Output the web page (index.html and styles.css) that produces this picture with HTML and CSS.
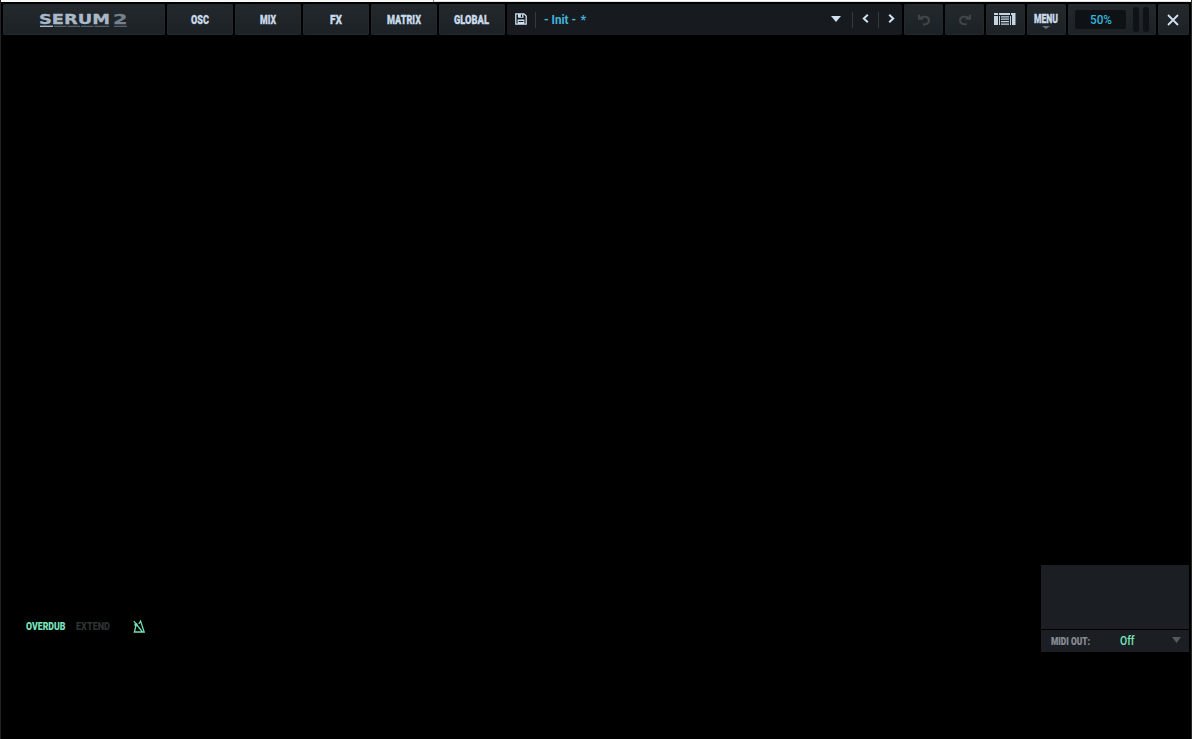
FILE: index.html
```
<!DOCTYPE html>
<html lang="en">
<head>
<meta charset="utf-8">
<title>Serum 2</title>
<link rel="stylesheet" href="styles.css">
</head>
<body>
<div class="plugin">
  <div class="host-strip"><span class="host-left"></span><span class="host-right"></span></div>
  <header class="bar">
    <div class="cell logo">
      <svg width="90" height="18" viewBox="0 0 90 18">
        <text class="brand" x="0" y="12.6" textLength="71" lengthAdjust="spacingAndGlyphs">SERUM</text>
        <text class="brand two" x="74" y="12.6" textLength="14.5" lengthAdjust="spacingAndGlyphs">2</text>
        <path d="M1 15.3H14" stroke="#a9b8c6" stroke-width="1.4"/>
        <path d="M15 15.3H27.5M28.5 15.3H41M42 15.3H54.5M55.5 15.3H70M75 15.3H88" stroke="#56616b" stroke-width="1.3"/>
      </svg>
    </div>
    <button class="cell"><svg class="label" width="18" height="16"><text x="0" y="12.5" textLength="18" lengthAdjust="spacingAndGlyphs">OSC</text></svg></button>
    <button class="cell"><svg class="label" width="16" height="16"><text x="0" y="12.5" textLength="16" lengthAdjust="spacingAndGlyphs">MIX</text></svg></button>
    <button class="cell"><svg class="label" width="12" height="16"><text x="0" y="12.5" textLength="12" lengthAdjust="spacingAndGlyphs">FX</text></svg></button>
    <button class="cell"><svg class="label" width="34" height="16"><text x="0" y="12.5" textLength="34" lengthAdjust="spacingAndGlyphs">MATRIX</text></svg></button>
    <button class="cell"><svg class="label" width="35" height="16"><text x="0" y="12.5" textLength="35" lengthAdjust="spacingAndGlyphs">GLOBAL</text></svg></button>
    <div class="cell preset">
      <svg class="save" width="12" height="12" viewBox="0 0 12 12"><path d="M.8.8H9L11.2 3V11.2H.8Z" fill="none" stroke="#cfe0ee" stroke-width="1.3"/><path d="M3 1H8.5V4.8H3ZM2.6 6.6H9.4V11H2.6Z" fill="#cfe0ee"/><path d="M6.5 1.5V4M3.6 8.5H8.4" stroke="#15191d" stroke-width="1.2"/></svg>
      <i class="sep"></i>
      <svg class="name" width="46" height="16"><text x="0" y="12.3" textLength="32" lengthAdjust="spacingAndGlyphs">- Init -</text><text x="36.5" y="12.3">*</text></svg>
      <svg class="tri" width="10" height="6"><path d="M0 0H10L5 6Z" fill="#cfe0ee"/></svg>
      <i class="sep"></i>
      <svg class="chev" width="7" height="9"><path d="M5.8 .8L1.8 4.5L5.8 8.2" /></svg>
      <i class="sep"></i>
      <svg class="chev last" width="7" height="9"><path d="M1.2 .8L5.2 4.5L1.2 8.2" /></svg>
    </div>
    <button class="cell"><svg class="history" width="14" height="12"><path d="M2 .8V4.7H6.2M2.4 4.4C5.5 1.8 12 2.2 12 6.5C12 9.5 9 10.8 5.8 10.3"/></svg></button>
    <button class="cell"><svg class="history" width="14" height="12"><path d="M12 .8V4.7H7.8M11.6 4.4C8.5 1.8 2 2.2 2 6.5C2 9.5 5 10.8 8.8 10"/></svg></button>
    <button class="cell"><svg class="browser" width="22" height="12" viewBox="0 0 22 12"><path d="M0 0H4V2H0ZM0 3H4V12H0ZM5 0H16V2H5ZM17 0H18V2H17ZM18 0H21.5V12H18ZM5 3H6V12H5ZM16 3H17V12H16ZM7 3.2H15V4.4H7ZM7 5.6H15V6.8H7ZM7 8H15V9.2H7ZM7 10.5H15V11.8H7Z"/></svg></button>
    <button class="cell"><svg class="label menu" width="24" height="20"><text x="0" y="12.5" textLength="24" lengthAdjust="spacingAndGlyphs">MENU</text><path d="M8 16H16L12 19Z" fill="#68727b"/></svg></button>
    <div class="cell volume">
      <div class="percent"><svg width="22" height="16"><text x="0" y="12" textLength="22" lengthAdjust="spacingAndGlyphs">50%</text></svg></div>
      <i class="meter"></i><i class="meter"></i>
    </div>
    <button class="cell"><svg class="close" width="12" height="12"><path d="M1 1L11 11M11 1L1 11" stroke="#d3e2ef" stroke-width="1.8"/></svg></button>
  </header>
  <main class="stage">
    <div class="record">
      <svg width="40" height="14"><text class="on" x="0" y="11" textLength="39.5" lengthAdjust="spacingAndGlyphs">OVERDUB</text></svg>
      <svg width="34" height="14"><text class="off" x="0" y="11" textLength="34" lengthAdjust="spacingAndGlyphs">EXTEND</text></svg>
      <svg class="metro" width="13" height="13" viewBox="0 0 13 13"><path d="M.8 1.2L9.5 12M2.8 6L1.4 12H11.2L7.6 1L5.8 4" fill="none" stroke="#70dfb3" stroke-width="1.3"/><circle cx="3" cy="4.8" r="1.7" fill="#70dfb3"/></svg>
    </div>
    <aside class="midi">
      <div class="pad"></div>
      <div class="out">
        <svg width="40" height="14"><text class="caption" x="0" y="11" textLength="39" lengthAdjust="spacingAndGlyphs">MIDI OUT:</text></svg>
        <svg class="value" width="16" height="16"><text x="0" y="12.4" textLength="14.5" lengthAdjust="spacingAndGlyphs">Off</text></svg>
        <svg class="drop" width="9" height="6"><path d="M0 0H9L4.5 6Z" fill="#555a5f"/></svg>
      </div>
    </aside>
  </main>
</div>
</body>
</html>
```
FILE: styles.css
```
* { box-sizing: border-box; }
body { margin: 0; background: #000; font-family: Roboto, "Liberation Sans", sans-serif; }
svg { display: block; flex: none; overflow: visible; }
.plugin { width: 1192px; height: 739px; display: flex; flex-direction: column; overflow: hidden; border-left: 1px solid #222; border-right: 1px solid #292929; }
.host-strip { height: 2px; display: flex; gap: 1px; background: #888; }
.host-left { width: 432px; background: #f5f6f6; }
.host-right { flex: 1; background: linear-gradient(#fff 50%, #dfe3e4 50%); }
.bar { display: grid; grid-template-columns: 162px repeat(5, 66px) 395px 39px 39px 39px 39px 88px 31px; gap: 2px; height: 33px; padding: 2px 2px 0; }
.cell { display: flex; align-items: center; justify-content: center; padding: 0; border: 0; border-radius: 2px; background: linear-gradient(#24292e, #1c2125); box-shadow: inset 0 0 0 1px #23282c; font: inherit; }
.label text { font-size: 12.2px; font-weight: 900; fill: #c9dae8; stroke: #c9dae8; stroke-width: .3px; }
.label { margin: -1px 1px 0 0; }
.brand { font-family: "DejaVu Sans", sans-serif; font-size: 14px; font-weight: 700; fill: #a9b9c8; stroke: #a9b9c8; stroke-width: .3px; }
.two { fill: #74818e; stroke: #74818e; }
.preset { justify-content: flex-start; background: #171b1f; box-shadow: none; }
.save { margin: -2px 8px 0 8px; }
.sep { width: 1px; height: 16px; background: #343a3f; }
.name { margin-left: 8px; }
.name text { font-size: 12.5px; font-weight: 700; fill: #43b3dc; }
.tri { margin: -1px 11px 0 auto; }
.chev { margin: -2px 9px 0; }
.last { margin-right: 7px; }
.chev path { fill: none; stroke: #cfe0ee; stroke-width: 2; }
.history path { fill: none; stroke: #3f454b; stroke-width: 2; }
.browser { margin: -1px 1px 0 0; fill: #c3d4e2; }
.menu { margin-top: 1px; }
.close { margin-right: 1px; }
.volume { justify-content: flex-start; padding-left: 7px; }
.percent { width: 51px; height: 19px; margin-right: 7px; border-radius: 2px; background: #0e1215; display: flex; align-items: center; justify-content: center; }
.percent text { font-size: 12.5px; font-weight: 500; fill: #36b4df; }
.meter { width: 6px; height: 25px; margin-right: 4px; border-radius: 3px; background: #0f1317; }
.stage { flex: 1; display: flex; justify-content: space-between; align-items: flex-start; padding: 530px 2px 0 25px; }
.record { display: flex; align-items: center; padding-top: 54px; }
.record text { font-size: 10px; font-weight: 900; }
.on { fill: #79e5bb; }
.off { fill: #2c3433; }
.record svg + svg { margin-left: 10px; }
.record .metro { margin-left: 23px; }
.midi { width: 148px; display: grid; gap: 1px; }
.pad { height: 64px; background: #1b1e22; }
.out { height: 22px; background: #1b1e22; display: flex; align-items: center; padding: 0 8px 0 10px; }
.caption { font-size: 10px; font-weight: 900; fill: #858b92; stroke: #858b92; stroke-width: .2px; }
.value { margin-left: 29px; }
.value text { font-size: 12.5px; font-weight: 500; fill: #79e5bb; }
.drop { margin: -2px 0 0 auto; }
```
